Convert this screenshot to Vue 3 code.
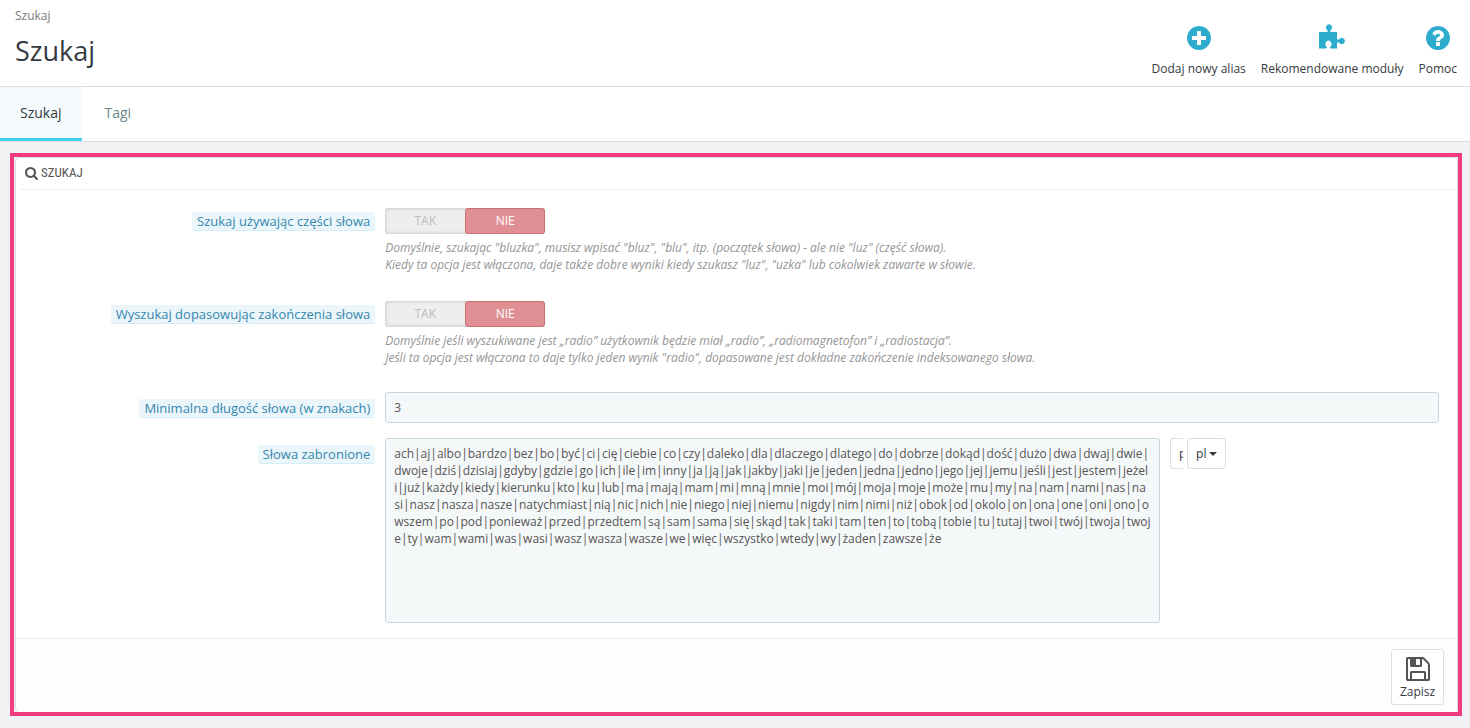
<script setup>
import { ref } from 'vue'

const actions = [
  {
    label: 'Dodaj nowy alias',
    viewBox: '0 0 1792 1792',
    path: 'M1344 960v-128q0-26-19-45t-45-19h-256v-256q0-26-19-45t-45-19h-128q-26 0-45 19t-19 45v256h-256q-26 0-45 19t-19 45v128q0 26 19 45t45 19h256v256q0 26 19 45t45 19h128q26 0 45-19t19-45v-256h256q26 0 45-19t19-45zm320-64q0 209-103 385.5t-279.5 279.5-385.5 103-385.5-103-279.5-279.5-103-385.5 103-385.5 279.5-279.5 385.5-103 385.5 103 279.5 279.5 103 385.5z',
  },
  {
    label: 'Rekomendowane moduły',
    viewBox: '0 2 28 28',
    path: 'M1 10H9C10 10 10 8.500 9 7.700A3 3 0 1 1 13 7.700C12 8.500 12 10 13 10H19V16C19 18 20.500 18 21.500 17A3 3 0 1 1 21.500 21C20.500 20 19 20 19 22V26.500H12.500C11.500 26 12 25 13 24A3 3.500 0 1 0 8 24C9 25 9 26 8 26.500H1Z',
  },
  {
    label: 'Pomoc',
    viewBox: '0 0 1792 1792',
    path: 'M1024 1376v-192q0-14-9-23t-23-9h-192q-14 0-23 9t-9 23v192q0 14 9 23t23 9h192q14 0 23-9t9-23zm256-672q0-88-55.5-163t-138.5-116-170-41q-243 0-371 213-15 24 8 42l132 100q7 6 19 6 16 0 25-12 53-68 86-92 34-24 86-24 48 0 85.5 26t37.5 59q0 38-20 61t-68 45q-63 28-115.5 86.5t-52.5 125.5v36q0 14 9 23t23 9h192q14 0 23-9t9-23q0-19 21.5-49.5t54.5-49.5q32-18 49-28.500t46-35 44.500-48 28-60.500 12.500-81zm384 192q0 209-103 385.500t-279.500 279.500-385.500 103-385.500-103-279.500-279.500-103-385.500 103-385.500 279.500-279.500 385.500-103 385.500 103 279.500 279.500 103 385.500z',
  },
]

const switches = ref([
  {
    id: 'within',
    label: 'Szukaj używając części słowa',
    value: 'no',
    help: [
      'Domyślnie, szukając "bluzka", musisz wpisać "bluz", "blu", itp. (początek słowa) - ale nie "luz" (część słowa).',
      'Kiedy ta opcja jest włączona, daje także dobre wyniki kiedy szukasz "luz", "uzka" lub cokolwiek zawarte w słowie.',
    ],
  },
  {
    id: 'ending',
    label: 'Wyszukaj dopasowując zakończenia słowa',
    value: 'no',
    help: [
      'Domyślnie jeśli wyszukiwane jest „radio” użytkownik będzie miał „radio”, „radiomagnetofon” i „radiostacja”.',
      'Jeśli ta opcja jest włączona to daje tylko jeden wynik "radio", dopasowane jest dokładne zakończenie indeksowanego słowa.',
    ],
  },
])

const minLength = ref('3')
const stopWords = ref(
  'ach|aj|albo|bardzo|bez|bo|być|ci|cię|ciebie|co|czy|daleko|dla|dlaczego|dlatego|do|dobrze|dokąd|dość|dużo|dwa|dwaj|dwie|dwoje|dziś|dzisiaj|gdyby|gdzie|go|ich|ile|im|inny|ja|ją|jak|jakby|jaki|je|jeden|jedna|jedno|jego|jej|jemu|jeśli|jest|jestem|jeżeli|już|każdy|kiedy|kierunku|kto|ku|lub|ma|mają|mam|mi|mną|mnie|moi|mój|moja|moje|może|mu|my|na|nam|nami|nas|nasi|nasz|nasza|nasze|natychmiast|nią|nic|nich|nie|niego|niej|niemu|nigdy|nim|nimi|niż|obok|od|okolo|on|ona|one|oni|ono|owszem|po|pod|ponieważ|przed|przedtem|są|sam|sama|się|skąd|tak|taki|tam|ten|to|tobą|tobie|tu|tutaj|twoi|twój|twoja|twoje|ty|wam|wami|was|wasi|wasz|wasza|wasze|we|więc|wszystko|wtedy|wy|żaden|zawsze|że',
)
</script>

<template>
  <div class="page">
    <header class="header">
      <div class="titles">
        <a class="crumb" href="#">Szukaj</a>
        <h1>Szukaj</h1>
      </div>
      <nav class="toolbar">
        <a v-for="a in actions" :key="a.label" href="#" class="tool">
          <svg :viewBox="a.viewBox" aria-hidden="true"><path :d="a.path" /></svg>
          <span>{{ a.label }}</span>
        </a>
      </nav>
    </header>

    <nav class="tabs">
      <a href="#" class="tab active">Szukaj</a>
      <a href="#" class="tab">Tagi</a>
    </nav>

    <main class="highlight">
      <form class="panel" @submit.prevent>
        <h2 class="panel-heading">
          <svg viewBox="0 0 1792 1792" aria-hidden="true"><path d="M1152 832q0-185-131.500-316.500t-316.500-131.500-316.500 131.500-131.500 316.500 131.500 316.500 316.500 131.500 316.500-131.500 131.500-316.500zm512 832q0 52-38 90t-90 38q-54 0-90-38l-343-342q-179 124-399 124-143 0-273.500-55.500t-225-150-150-225-55.500-273.500 55.500-273.500 150-225 225-150 273.500-55.500 273.500 55.500 225 150 150 225 55.500 273.500q0 220-124 399l343 343q37 37 37 90z" /></svg>
          <span>SZUKAJ</span>
        </h2>

        <div class="fields">
          <div v-for="s in switches" :key="s.id" class="row switch-row" role="radiogroup" :aria-labelledby="s.id + '-label'">
            <div class="label-cell"><span :id="s.id + '-label'" class="tag">{{ s.label }}</span></div>
            <div class="control">
              <div class="switch">
                <label class="option yes">
                  <input v-model="s.value" type="radio" :name="s.id" value="yes"><span>TAK</span>
                </label>
                <label class="option no">
                  <input v-model="s.value" type="radio" :name="s.id" value="no"><span>NIE</span>
                </label>
              </div>
              <p class="help"><span v-for="line in s.help" :key="line">{{ line }}</span></p>
            </div>
          </div>

          <div class="row">
            <div class="label-cell"><label class="tag" for="min-length">Minimalna długość słowa (w znakach)</label></div>
            <input id="min-length" v-model="minLength" class="field" type="text">
          </div>

          <div class="row">
            <div class="label-cell"><label class="tag" for="stop-words">Słowa zabronione</label></div>
            <div class="words">
              <textarea id="stop-words" v-model="stopWords" class="field" spellcheck="false"></textarea>
              <div class="languages">
                <button type="button" class="lang clipped">pl</button>
                <button type="button" class="lang">pl <i class="caret"></i></button>
              </div>
            </div>
          </div>
        </div>

        <footer class="panel-footer">
          <button type="submit" class="save">
            <svg viewBox="0 0 1792 1792" aria-hidden="true"><path d="M512 1536h768v-384h-768v384zm896 0h128v-896q0-14-10-38.500t-20-34.500l-281-281q-10-10-34-20t-39-10v416q0 40-28 68t-68 28h-576q-40 0-68-28t-28-68v-416h-128v1280h128v-416q0-40 28-68t68-28h832q40 0 68 28t28 68v416zm-384-928v-320q0-13-9.500-22.500t-22.500-9.500h-192q-13 0-22.500 9.500t-9.500 22.500v320q0 13 9.500 22.500t22.500 9.500h192q13 0 22.500-9.500t9.500-22.500zm640 32v928q0 40-28 68t-68 28h-1344q-40 0-68-28t-28-68v-1344q0-40 28-68t68-28h928q40 0 88 20t76 48l280 280q28 28 48 76t20 88z" /></svg>
            <span>Zapisz</span>
          </button>
        </footer>
      </form>
    </main>
  </div>
</template>

<style>
body {
  margin: 0;
  background: #eff1f2;
}
</style>

<style scoped>
.page,
.page * {
  box-sizing: border-box;
}

.page {
  color: #363a41;
  font: 12px/17px "Open Sans", "Noto Sans", sans-serif;
}

a {
  color: inherit;
  text-decoration: none;
}

svg {
  display: block;
  fill: currentColor;
}

button,
input,
textarea {
  margin: 0;
  font: inherit;
}

.header {
  display: flex;
  justify-content: space-between;
  min-height: 87px;
  padding: 7px 13px 0 15px;
  border-bottom: 1px solid #dddddd;
  background: #fff;
}

.crumb {
  color: #7a7a7a;
}

h1 {
  margin: 9px 0 0;
  font-size: 27px;
  font-weight: 400;
  line-height: 36px;
}

.toolbar {
  display: flex;
  gap: 15px;
  padding-top: 17px;
}

.tool {
  display: flex;
  flex-direction: column;
  align-items: center;
  gap: 8px;
}

.tool svg {
  width: 28px;
  height: 28px;
  color: #2eacce;
}

.tabs {
  display: flex;
  border-bottom: 1px solid #dddddd;
  background: #fff;
  font-size: 14px;
}

.tab {
  padding: 16px 23px 15px;
  border-bottom: 3px solid transparent;
  line-height: 20px;
  color: #6c868e;
}

.tab.active {
  padding-inline: 20px;
  border-color: #3ed2f0;
  background: #f4f9fc;
  color: #363a41;
}

.highlight {
  margin: 11px 8px 12px 10px;
  padding-left: 1px;
  border: 4px solid #f03b80;
}

.panel {
  overflow: hidden;
  border: 1px solid #d8dadd;
  border-width: 1px 1px 0;
  border-radius: 5px;
  background: #fff;
}

.panel-heading {
  display: flex;
  align-items: center;
  gap: 2px;
  height: 32px;
  margin: 0 0 0 4px;
  padding: 0 0 1px 5px;
  border-bottom: 1px solid #eeeeee;
  color: #555;
  font: 400 13px/20px "Ubuntu Condensed", "Roboto Condensed", "Open Sans Condensed", "Open Sans", sans-serif;
}

.panel-heading svg {
  width: 14px;
  height: 14px;
}

.fields {
  padding: 18px 18px 15px 8px;
}

.row {
  display: grid;
  grid-template-columns: minmax(0, 1fr) minmax(0, 3fr);
  column-gap: 10px;
  margin-bottom: 15px;
}

.row:last-child {
  margin-bottom: 0;
}

.row.switch-row {
  margin-bottom: 28px;
}

.switch-row + .row.switch-row {
  margin-bottom: 26px;
}

.label-cell {
  padding-top: 7px;
  text-align: right;
}

.switch-row .label-cell {
  padding-top: 4px;
}

.tag {
  display: inline-block;
  padding: 0 5px;
  border-bottom: 1px solid #d5edf7;
  border-radius: 3px;
  background: #ebf6fb;
  color: #3586ae;
  font-size: 13px;
  line-height: 18px;
}

.switch {
  display: flex;
  width: 160px;
  height: 26px;
  border-radius: 3px;
  background: #eee;
  box-shadow: inset 0 0 3px 1px #ccc;
}

.option {
  position: relative;
  display: flex;
  flex: 1;
  align-items: center;
  justify-content: center;
  padding-bottom: 1px;
  border: 1px solid transparent;
  border-radius: 3px;
  color: #bbb;
}

.option input {
  position: absolute;
  inset: 0;
  opacity: 0;
}

.option:has(input:checked) {
  border-color: #ca6f6f;
  background: #e08f95;
  color: #fff;
}

.option.yes:has(input:checked) {
  border-color: #72c279;
  background: #92d097;
}

.help {
  margin: 5px 0 0;
  color: #959595;
  font-style: italic;
}

.help span {
  display: block;
}

.field {
  width: 100%;
  height: 31px;
  padding: 6px 8px;
  border: 1px solid #c7d6db;
  border-radius: 3px;
  outline: 0;
  background: #f5f8f9;
  color: #555;
}

.words {
  display: grid;
  grid-template-columns: minmax(0, 775fr) minmax(0, 269fr);
  column-gap: 10px;
}

textarea.field {
  display: block;
  height: 185px;
  resize: none;
  word-break: break-all;
}

.languages {
  display: flex;
  align-items: flex-start;
  gap: 4px;
}

.lang {
  display: flex;
  align-items: center;
  gap: 3px;
  height: 31px;
  padding: 0 8px;
  border: 1px solid #dedede;
  border-radius: 3px;
  background: #fff;
  color: #363a41;
}

.lang.clipped {
  width: 13px;
  padding-right: 0;
  overflow: hidden;
  border-right: 0;
  border-radius: 3px 0 0 3px;
}

.caret {
  border: 4px solid transparent;
  border-top-color: currentColor;
  border-bottom: 0;
}

.panel-footer {
  display: flex;
  justify-content: flex-end;
  padding: 10px 13px 7px;
  border-top: 1px solid #eeeeee;
  background: #fcfdfe;
}

.save {
  display: flex;
  flex-direction: column;
  align-items: center;
  justify-content: flex-start;
  width: 53px;
  height: 56px;
  padding: 5px 0 0;
  border: 1px solid #dedede;
  border-radius: 3px;
  background: #fff;
  color: #363a41;
}

.save svg {
  width: 28px;
  height: 28px;
  color: #555;
}
</style>
